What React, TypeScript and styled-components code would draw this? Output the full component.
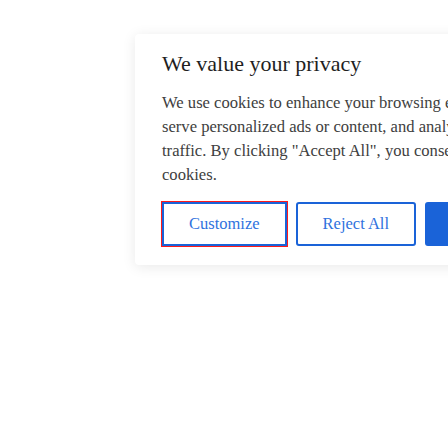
import React from "react";
import styled, { createGlobalStyle } from "styled-components";

const Global = createGlobalStyle`
  html, body {
    margin: 0;
    padding: 0;
    background: #ffffff;
    overflow: hidden;
  }
  body {
    font-family: "Liberation Serif", "Times New Roman", serif;
  }
`;

const Page = styled.div`
  width: 448px;
  height: 448px;
  box-sizing: border-box;
  padding: 34px 0 0 135px;
  overflow: hidden;
`;

const Card = styled.section`
  width: 500px;
  box-sizing: border-box;
  background: #ffffff;
  border-radius: 4px;
  box-shadow: 0 2px 14px rgba(0, 0, 0, 0.09);
  padding: 18px 27px 19px 27px;
`;

const Title = styled.h2`
  margin: 0 0 15px 0;
  font-family: "Liberation Serif", "Times New Roman", serif;
  font-weight: 400;
  font-size: 22px;
  line-height: 24px;
  color: #1f1f1f;
`;

const Body = styled.p`
  margin: 0 0 15px 0;
  font-family: "Liberation Serif", "Times New Roman", serif;
  font-size: 16.6px;
  line-height: 24px;
  color: #404040;
  white-space: nowrap;
`;

const Actions = styled.div`
  display: flex;
  gap: 9px;
  align-items: center;
`;

const Button = styled.button<{ $primary?: boolean; $focused?: boolean }>`
  height: 44px;
  box-sizing: border-box;
  padding: 0 25px;
  border: 2px solid #1a63d8;
  border-radius: ${(p) => (p.$focused ? "0" : "3px")};
  background: ${(p) => (p.$primary ? "#1a63d8" : "#ffffff")};
  color: ${(p) => (p.$primary ? "#ffffff" : "#2f72de")};
  font-family: "Liberation Serif", "Times New Roman", serif;
  font-size: 16.5px;
  white-space: nowrap;
  outline: ${(p) => (p.$focused ? "1px solid #ff1a1a" : "none")};
  outline-offset: 0;
  cursor: pointer;
`;

export default function App() {
  return (
    <>
      <Global />
      <Page>
        <Card>
          <Title>We value your privacy</Title>
          <Body>
            We use cookies to enhance your browsing experience,
            <br />
            serve personalized ads or content, and analyze our
            <br />
            traffic. By clicking "Accept All", you consent to our use of
            <br />
            cookies.
          </Body>
          <Actions>
            <Button $focused>Customize</Button>
            <Button>Reject All</Button>
            <Button $primary>Accept All</Button>
          </Actions>
        </Card>
      </Page>
    </>
  );
}
